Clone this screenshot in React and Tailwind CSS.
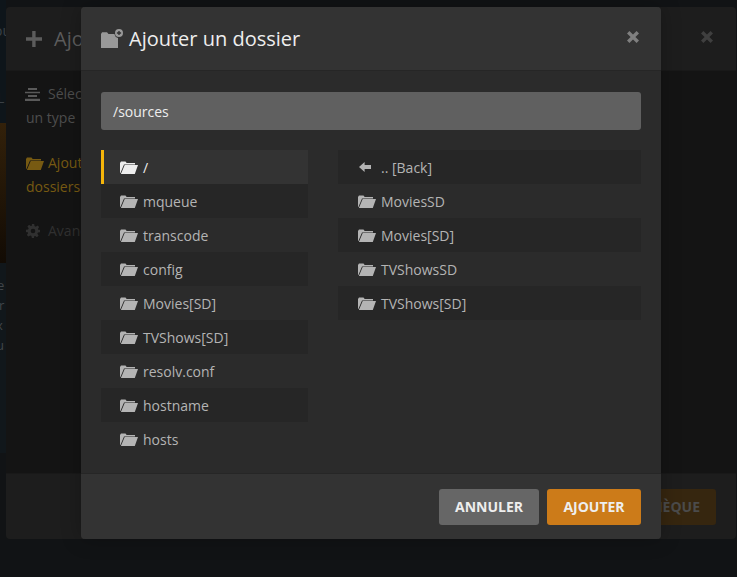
const FolderOpen = ({ className }) => (
  <svg viewBox="0 0 18 13" className={className} fill="currentColor">
    <path d="M0 12V1.9L1 .4h4.5l1.2 1.5H15v1.5H4L.4 12H0z" />
    <path d="M4.7 3.9H18l-3.2 9H.9l3.8-9z" />
  </svg>
);

const FolderAdd = ({ className }) => (
  <svg viewBox="0 0 22 19" className={className} fill="currentColor">
    <path d="M0 19V5L1.1 3.2H6L7.5 5h5.9A5 5 0 0 0 17 9v10H0z" />
    <path fillRule="evenodd" d="M18 0a4 4 0 1 1 0 8 4 4 0 0 1 0-8zm-.7 1.9v1.4h-1.4v1.4h1.4v1.4h1.4V4.7h1.4V3.3h-1.4V1.9h-1.4z" />
  </svg>
);

const Cross = ({ className }) => (
  <svg viewBox="0 0 12 12" className={className} fill="currentColor">
    <path d="M2.4 0 6 3.6 9.6 0 12 2.4 8.4 6l3.6 3.6L9.6 12 6 8.4 2.4 12 0 9.6 3.6 6 0 2.4z" />
  </svg>
);

const ArrowLeft = ({ className }) => (
  <svg viewBox="0 0 12 10" className={className} fill="currentColor">
    <path d="M5.6 0v3H12v4H5.6v3L0 5z" />
  </svg>
);

const Plus = ({ className }) => (
  <svg viewBox="0 0 16 16" className={className} fill="currentColor">
    <path d="M6.2 0h3.4v6.3H16v3.4H9.6V16H6.2V9.7H0V6.3h6.2z" />
  </svg>
);

const Lines = ({ className }) => (
  <svg viewBox="0 0 15 13" className={className} fill="currentColor">
    <path d="M3 0h9v2H3zM0 3.7h15v1.6H0zM3 7h9v2H3zM0 10.8h15V13H0z" />
  </svg>
);

const Gear = ({ className }) => (
  <svg viewBox="0 0 24 24" className={className} fill="currentColor">
    <path fillRule="evenodd" d="M10 0h4l.6 3.6 2.2.9 3-2.1 2.8 2.8-2.1 3 .9 2.2L24 10v4l-3.6.6-.9 2.2 2.1 3-2.8 2.8-3-2.1-2.2.9L14 24h-4l-.6-3.6-2.2-.9-3 2.1-2.8-2.8 2.1-3-.9-2.2L0 14v-4l3.6-.6.9-2.2-2.1-3 2.8-2.8 3 2.1 2.2-.9L10 0zm2 8a4 4 0 1 0 0 8 4 4 0 0 0 0-8z" />
  </svg>
);

const leftItems = ['mqueue', 'transcode', 'config', 'Movies[SD]', 'TVShows[SD]', 'resolv.conf', 'hostname', 'hosts'];
const rightItems = ['MoviesSD', 'Movies[SD]', 'TVShowsSD', 'TVShows[SD]'];

const Row = ({ name, striped, selected, icon, right }) => (
  <div
    className={`flex items-center h-[34px] text-[14px] ${
      selected
        ? 'bg-[#333333] text-[#eeeeee] border-l-[3px] border-[#f5b50a] pl-4'
        : `text-[#b4b4b4] ${right ? 'pl-5' : 'pl-[19px]'} ${striped ? 'bg-[#262626]' : ''}`
    }`}
  >
    {icon || <FolderOpen className={`w-[18px] h-[13px] shrink-0 ${selected ? 'text-[#eeeeee]' : 'text-[#b4b4b4]'}`} />}
    <span className="ml-[5px]">{name}</span>
  </div>
);

export default function App() {
  return (
    <div className="relative h-[577px] w-full overflow-hidden bg-[#111315] font-['Open_Sans',sans-serif]">
      {/* page behind the dialogs */}
      <div className="absolute left-0 top-0 h-[123px] w-[6px] overflow-hidden bg-[#0e151a] text-[14px] text-[#3a4045]">
        <div className="mt-[20px] -ml-[6px] whitespace-nowrap">ou</div>
        <div className="mt-[46px] -ml-[3px]">L</div>
      </div>
      <div className="absolute left-0 top-[123px] h-[140px] w-[6px] bg-gradient-to-b from-[#33210a] to-[#120b04]" />
      <div className="absolute left-0 top-[263px] flex h-[190px] w-[6px] flex-col overflow-hidden bg-[#11171b] pt-[12px] text-[13px] leading-[20px] text-[#41464a]">
        <span className="-ml-[3px]">e</span>
        <span className="-ml-[1px]">r</span>
        <span className="-ml-[4px]">x</span>
        <span className="-ml-[4px]">u</span>
      </div>

      {/* library dialog, dimmed */}
      <div className="absolute left-[6px] top-[7px] flex h-[532px] w-[730px] flex-col rounded-[4px] bg-[#141414]">
        <div className="flex h-[64px] shrink-0 items-center rounded-t-[4px] border-b border-[#191919] bg-[#1d1d1d] pl-5 pr-[23px]">
          <Plus className="h-4 w-4 text-[#5c5c5c]" />
          <span className="ml-3 text-[20px] text-[#5c5c5c]">Ajouter une bibliothèque</span>
          <Cross className="ml-auto h-3 w-3 -translate-y-[2px] text-[#3f3f3f]" />
        </div>
        <div className="flex-1 px-5 pt-[11px]">
          <div className="flex w-[60px] flex-col text-[14px] leading-6">
            <div className="flex items-center whitespace-nowrap text-[#4d4d4d]">
              <Lines className="mr-[7px] h-[13px] w-[15px] shrink-0 -translate-x-[1px] text-[#5a5a5a]" />Sélectionner
            </div>
            <div className="whitespace-nowrap text-[#4d4d4d]">un type</div>
            <div className="mt-[21px] flex items-center whitespace-nowrap text-[#775a12]">
              <FolderOpen className="mr-[4px] h-[13px] w-[18px] shrink-0" />Ajouter
            </div>
            <div className="whitespace-nowrap text-[#775a12]">dossiers</div>
            <div className="mt-[20px] flex items-center whitespace-nowrap text-[#303030]">
              <Gear className="mr-2 h-[14px] w-[14px] shrink-0" />Avancé
            </div>
          </div>
        </div>
        <div className="flex h-[66px] shrink-0 items-center justify-end rounded-b-[4px] border-t border-[#191919] bg-[#1d1d1d] pr-5">
          <div className="flex h-[36px] items-center rounded-[3px] bg-[#36260f] px-4 text-[14px] font-bold text-[#4b4b4b]">
            BIBLIOTHÈQUE
          </div>
        </div>
      </div>

      {/* folder dialog */}
      <div className="absolute left-[81px] top-[7px] flex h-[532px] w-[580px] flex-col rounded-[4px] bg-[#2b2b2b] shadow-[0_0_20px_rgba(0,0,0,0.25)]">
        <div className="flex h-[64px] shrink-0 items-center rounded-t-[4px] border-b border-[#262626] bg-[#333333] pl-5 pr-[22px]">
          <FolderAdd className="h-[19px] w-[22px] shrink-0 text-[#999999]" />
          <h2 className="ml-[6px] text-[20px] font-normal text-[#eeeeee]">Ajouter un dossier</h2>
          <Cross className="ml-auto h-3 w-3 -translate-y-[2px] text-[#7f7f7f]" />
        </div>

        <div className="flex-1 px-5 pt-[21px]">
          <div className="flex h-[38px] items-center rounded-[3px] bg-[#606060] px-3 text-[14px] text-[#eeeeee]">
            /sources
          </div>
          <div className="mt-5 flex gap-[30px]">
            <div className="w-[207px]">
              <Row name="/" selected />
              {leftItems.map((name, i) => (
                <Row key={name} name={name} striped={i % 2 === 0} />
              ))}
            </div>
            <div className="flex-1">
              <Row
                right
                name=".. [Back]"
                striped
                icon={<ArrowLeft className="ml-[1px] mr-[5px] h-[10px] w-[12px] shrink-0 text-[#b4b4b4]" />}
              />
              {rightItems.map((name, i) => (
                <Row right key={name} name={name} striped={i % 2 === 1} />
              ))}
            </div>
          </div>
        </div>

        <div className="flex h-[66px] shrink-0 items-center justify-end gap-2 rounded-b-[4px] border-t border-[#262626] bg-[#333333] pr-5">
          <button className="h-[36px] w-[100px] rounded-[3px] bg-[#666666] text-[14px] font-bold text-[#eeeeee]">
            ANNULER
          </button>
          <button className="h-[36px] w-[94px] rounded-[3px] bg-[#cc7b19] text-[14px] font-bold text-[#eeeeee]">
            AJOUTER
          </button>
        </div>
      </div>
    </div>
  );
}
